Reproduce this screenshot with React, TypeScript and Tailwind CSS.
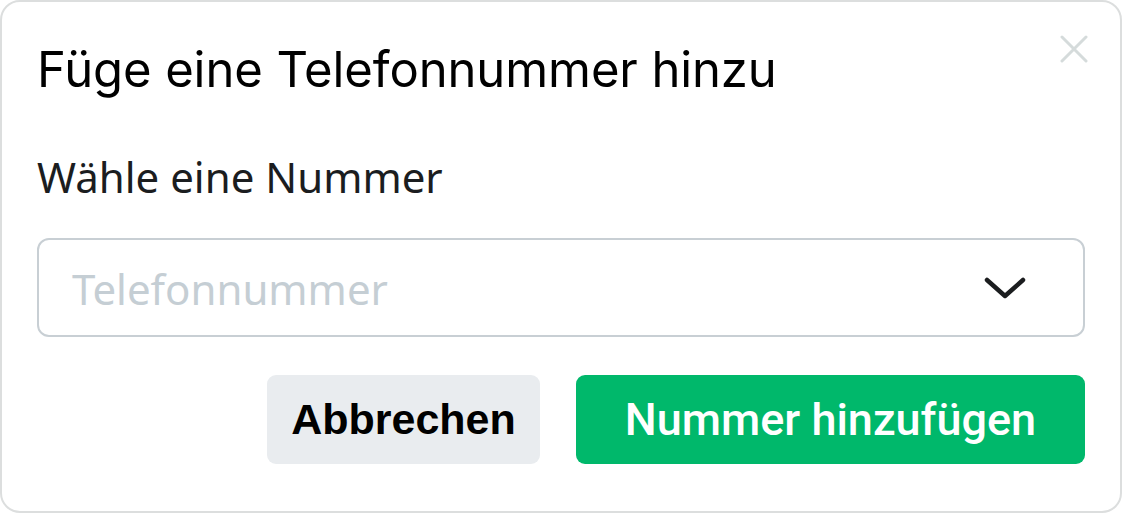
import React from "react";

const CloseIcon = () => (
  <svg width="28" height="28" viewBox="0 0 28 28" fill="none">
    <path d="M2 2L26 26M26 2L2 26" stroke="#d5dbdb" strokeWidth="3" strokeLinecap="round" />
  </svg>
);

const ChevronDown = () => (
  <svg width="44" height="26" viewBox="0 0 44 26" fill="none">
    <path d="M4 5L22 21L40 5" stroke="#1b1d1f" strokeWidth="4.5" strokeLinecap="round" strokeLinejoin="round" />
  </svg>
);

export default function App() {
  return (
    <div className="w-[1122px] h-[513px] bg-white">
      <div className="relative w-full h-full flex flex-col border-2 border-[#dcdede] rounded-[20px] bg-white px-[35px] pt-[40px]">
        <button className="absolute right-[32px] top-[33px] p-0" aria-label="Schließen">
          <CloseIcon />
        </button>
        <h2 className="font-['Inter',sans-serif] text-[49px] leading-[56px] font-normal text-black tracking-[-0.1px]">
          Füge eine Telefonnummer hinzu
        </h2>
        <label className="mt-[54px] font-['Noto_Sans',sans-serif] text-[42px] leading-[50px] text-[#1b1d1f]">
          Wähle eine Nummer
        </label>
        <div className="mt-[36px] h-[99px] shrink-0 flex items-center justify-between border-2 border-[#c8cfd4] rounded-[12px] pl-[33px] pr-[56px]">
          <span className="font-['Noto_Sans',sans-serif] text-[42px] leading-[50px] text-[#c5ced4] mt-[2px]">
            Telefonnummer
          </span>
          <ChevronDown />
        </div>
        <div className="mt-[38px] flex justify-end gap-[36px]">
          <button className="w-[273px] h-[89px] rounded-[9px] bg-[#e9ecef] font-['Liberation_Sans',Arial,sans-serif] font-bold text-[43px] text-black">
            Abbrechen
          </button>
          <button className="w-[509px] h-[89px] rounded-[9px] bg-[#00b86b] font-['Roboto',sans-serif] font-medium text-[45px] text-white">
            Nummer hinzufügen
          </button>
        </div>
      </div>
    </div>
  );
}
